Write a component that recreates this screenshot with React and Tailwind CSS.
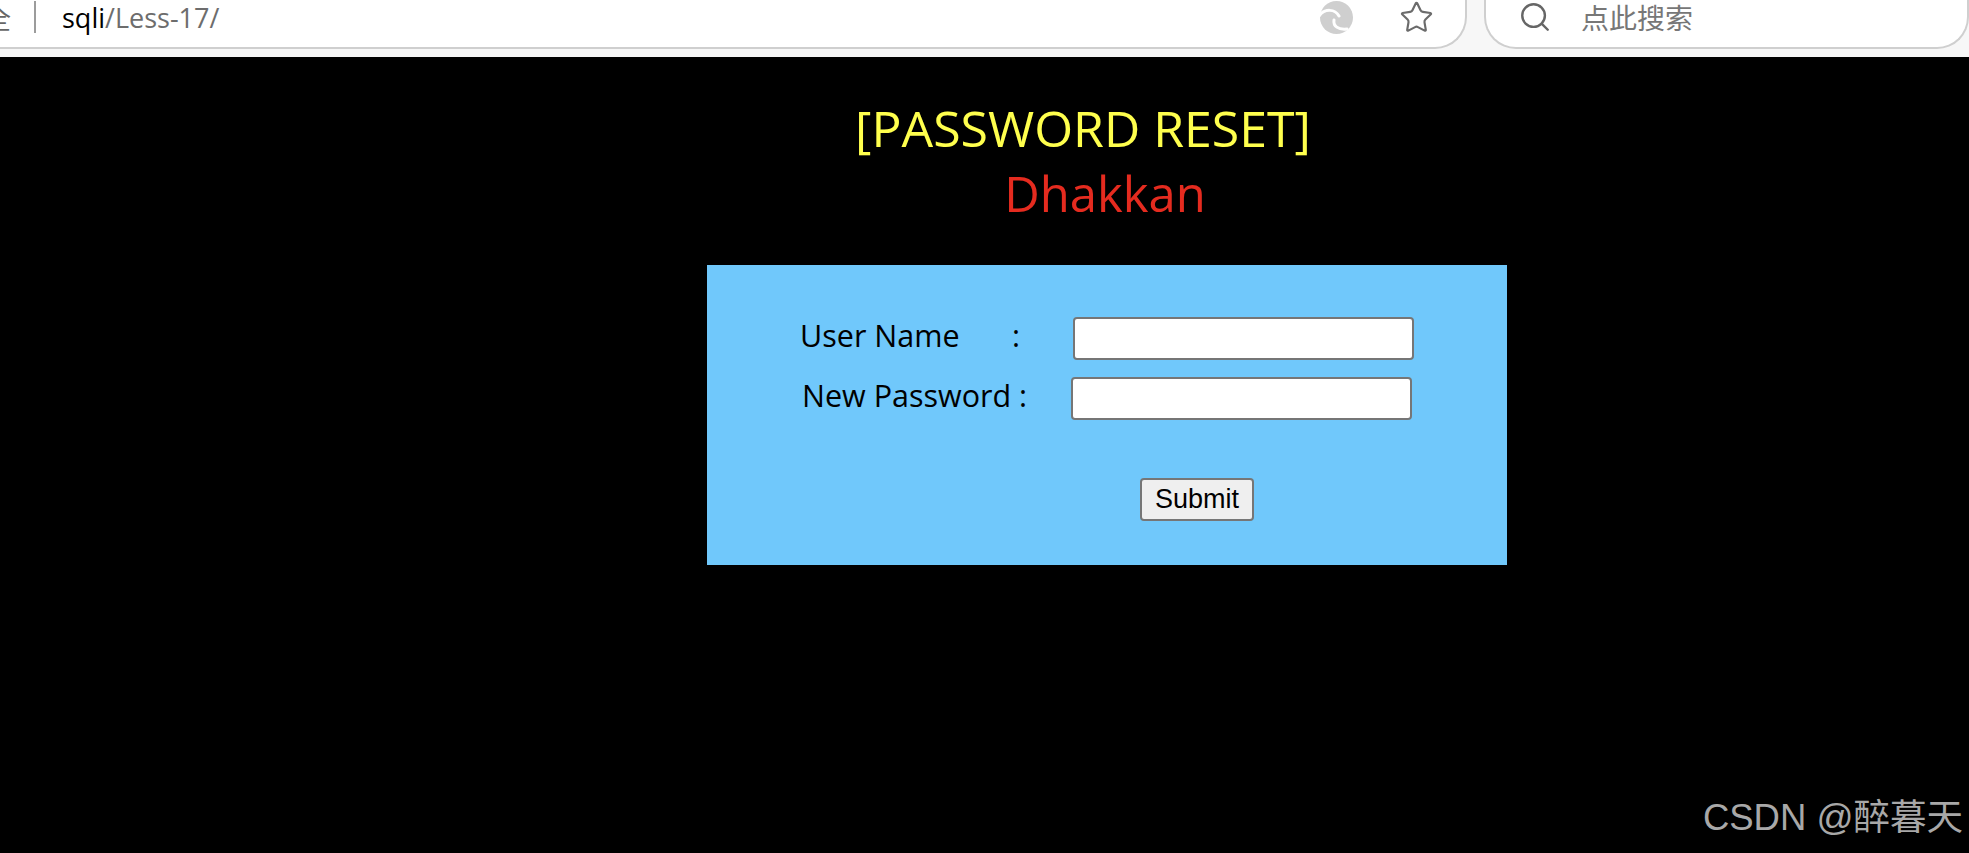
import { Search, Star } from 'lucide-react'

// Edge's swirl logo, greyed out in the address bar
function EdgeMark() {
  return (
    <svg width="33" height="33" viewBox="0 0 33 33">
      <circle cx="16.500" cy="16.500" r="16.500" fill="#cfcfcf" />
      <path fill="none" stroke="#fff" strokeWidth="3" strokeLinecap="round" d="M-1 15C5 7 15 8 19 15" />
      <path fill="none" stroke="#fff" strokeWidth="3" strokeLinecap="round" d="M14 19C13 25 18 29 27 28" />
    </svg>
  )
}

function Row({ label, labelClass, className, children }) {
  return (
    <div className={`flex items-center h-[43px] ${className}`}>
      <span className={`whitespace-pre text-[30.500px] leading-none text-black mb-[6px] ${labelClass}`}>{label}{children}</span>
      <input className="w-[341px] h-[43px] bg-white border-2 border-[#767676] rounded-[4px]" />
    </div>
  )
}

export default function App() {
  return (
    <div className="relative w-[1969px] h-[853px] overflow-hidden bg-black font-['Open_Sans','Noto_Sans',sans-serif]">
      {/* Browser chrome */}
      <header className="h-[57px] bg-[#f7f7f7]">
        <div className="flex h-[49px]">
          <div className="flex flex-1 items-center h-full pb-[13px] bg-white border-b-2 border-r-2 border-[#cfcfcf] rounded-br-[32px] overflow-hidden">
            <span className="shrink-0 ml-[-16px] w-[27px] text-[27px] leading-none text-[#666] font-['Noto_Sans_CJK_SC',sans-serif]">全</span>
            <div className="shrink-0 ml-[23px] w-[2px] h-[32px] bg-[#9c9c9c]" />
            <div className="ml-[26px] text-[27px] leading-none">
              <span className="text-black">sqli</span>
              <span className="text-[#6d6d6d]">/Less-17/</span>
            </div>
            <div className="ml-auto mr-[31px] flex items-center gap-[46px]">
              <EdgeMark />
              <Star size={35} strokeWidth={1.5} className="text-[#6b6b6b]" />
            </div>
          </div>
          <div className="ml-[17px] w-[485px] flex items-center h-full pb-[13px] pl-[32px] bg-white border-b-2 border-x-2 border-[#cfcfcf] rounded-b-[32px]">
            <Search size={34} strokeWidth={1.7} className="text-[#666]" />
            <span className="ml-[29px] text-[28px] leading-none text-[#777] font-['Noto_Sans_CJK_SC',sans-serif]">点此搜索</span>
          </div>
        </div>
      </header>

      {/* Page */}
      <main className="ml-[707px] w-[800px] text-center">
        <div className="mt-[39px] pr-[48px] text-[#ffff4d] text-[50px] leading-[64px] whitespace-nowrap">[PASSWORD RESET]</div>
        <div className="mt-[1px] pr-[4px] text-[#e52b1f] text-[49px] leading-[64px]">Dhakkan</div>

        <form className="mt-[40px] h-[300px] pt-[52px] bg-[#70c8fb] text-left">
          <Row label={'User Name      '} labelClass="ml-[93px] w-[273px]">
            <span className="ml-[5px]">:</span>
          </Row>
          <Row label="New Password :" labelClass="ml-[95px] w-[269px]" className="mt-[17px]" />
          <div className="mt-[58px] ml-[433px]">
            <button type="button" className="w-[114px] h-[43px] bg-[#efefef] border-2 border-[#767676] rounded-[4px] text-black text-[27px] leading-none font-['Liberation_Sans',sans-serif]">Submit</button>
          </div>
        </form>
      </main>

      {/* CSDN watermark */}
      <div className="absolute right-[6px] bottom-[17px] text-[#a8a8a8] text-[36.500px] leading-none whitespace-nowrap font-['Liberation_Sans','Noto_Sans_CJK_SC',sans-serif]">CSDN @醉暮天</div>
    </div>
  )
}
